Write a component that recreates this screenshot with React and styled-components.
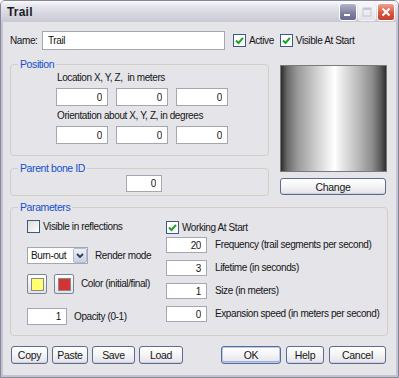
import React from 'react';
import styled, { createGlobalStyle, css } from 'styled-components';

const FONT = `"Liberation Sans", Arial, sans-serif`;

const GlobalStyle = createGlobalStyle`
  html, body { margin: 0; padding: 0; background: #ffffff; }
  * { box-sizing: border-box; }
`;

const Window = styled.div`
  width: 399px;
  height: 378px;
  display: flex;
  flex-direction: column;
  background: #c4c4d0;
  border: 1px solid #86869a;
  border-radius: 5px 5px 0 0;
  overflow: hidden;
  font-family: ${FONT};
  font-size: 10px;
  letter-spacing: -0.4px;
  color: #151515;
`;

const TitleBar = styled.div`
  height: 21px;
  flex: none;
  display: flex;
  align-items: center;
  justify-content: space-between;
  padding: 0 3px 0 6px;
  background: linear-gradient(#fdfdfe 0%, #e9e9f0 18%, #d9d9e2 55%, #c9c9d5 100%);
`;

const Title = styled.span`
  font-family: "Liberation Sans", Arial, sans-serif;
  font-weight: bold;
  font-size: 12px;
  letter-spacing: 0.2px;
  color: #1c1c26;
`;

const TitleButtons = styled.div`
  display: flex;
  gap: 1px;
  padding-top: 1px;
`;

const titleVariants = {
  min: css`
    background: linear-gradient(#b4b4cc, #7c7ca0 60%, #6a6a90);
    border-color: #ffffff;
  `,
  max: css`
    background: linear-gradient(#f6f6fa, #e2e2ea);
    border-color: #f4f4f8;
  `,
  close: css`
    background: linear-gradient(#f0a090, #d8583e 55%, #c4402a);
    border-color: #ffffff;
  `,
};

const TitleBtn = styled.div`
  width: 18px;
  height: 18px;
  border: 1px solid;
  border-radius: 3px;
  display: flex;
  align-items: center;
  justify-content: center;
  ${(p) => titleVariants[p.$kind]}
`;

const Body = styled.div`
  flex: 1;
  margin: 0 2px 2px;
  background: #e4e4e9;
  padding: 9px 8px 0 7px;
  display: flex;
  flex-direction: column;
`;

const Row = styled.div`
  display: flex;
  align-items: center;
  gap: ${(p) => p.$gap || 0}px;
  margin-top: ${(p) => p.$mt || 0}px;
  margin-left: ${(p) => p.$ml || 0}px;
`;

const FieldLabel = styled.span`
  width: ${(p) => (p.$w ? `${p.$w}px` : 'auto')};
  white-space: nowrap;
  line-height: 12px;
  padding-left: ${(p) => p.$pl || 0}px;
`;

const TextBox = styled.input`
  width: ${(p) => p.$w}px;
  height: ${(p) => p.$h || 17}px;
  border: 1px solid #a2a7b2;
  background: #ffffff;
  font-family: ${FONT};
  font-size: 10px;
  letter-spacing: -0.4px;
  color: #151515;
  padding: 0 5px;
  margin: 0;
  text-align: ${(p) => (p.$left ? 'left' : 'right')};
  outline: none;
`;

const CheckWrap = styled.label`
  display: flex;
  align-items: center;
  gap: 3px;
  white-space: nowrap;
  margin-left: ${(p) => p.$ml || 0}px;
  margin-top: ${(p) => p.$mt || 0}px;
`;

const CheckBox = styled.span`
  width: 13px;
  height: 13px;
  border: 1px solid #3a5a80;
  background: ${(p) => (p.$on ? '#ffffff' : 'linear-gradient(135deg, #dcdcd8, #ffffff)')};
  display: flex;
  align-items: center;
  justify-content: center;
`;

const Check = ({ on, children, ml, mt }) => (
  <CheckWrap $ml={ml} $mt={mt}>
    <CheckBox $on={on}>
      {on && (
        <svg width="9" height="9" viewBox="0 0 9 9">
          <path d="M1 4.5 L3.5 7 L8 1.8" fill="none" stroke="#21a121" strokeWidth="2" />
        </svg>
      )}
    </CheckBox>
    {children}
  </CheckWrap>
);

const TopGrid = styled.div`
  display: grid;
  grid-template-columns: 259px 107px;
  column-gap: 11px;
  margin-top: 8px;
`;

const Column = styled.div`
  display: flex;
  flex-direction: column;
  gap: ${(p) => p.$gap || 0}px;
`;

const Group = styled.fieldset`
  margin: ${(p) => p.$m || 0};
  min-width: 0;
  border: 1px solid #cfcfc6;
  border-radius: 4px;
  padding: 0;
`;

const GroupBody = styled.div`
  padding: ${(p) => p.$pad};
`;

const Legend = styled.legend`
  margin-left: 7px;
  padding: 0 2px;
  color: #1450c8;
  font-size: 10.5px;
  line-height: 12px;
`;

const InputTriple = styled.div`
  display: flex;
  gap: 8px;
  margin-top: ${(p) => p.$mt || 0}px;
`;

const Picture = styled.div`
  width: 107px;
  height: 107px;
  margin-top: 7px;
  border: 1px solid #7a7a7a;
  background: linear-gradient(
    to right,
    #2c2c2c 0%,
    #6a6a6a 6%,
    #9a9a9a 16%,
    #c4c4c4 30%,
    #f2f2f2 46%,
    #ffffff 51%,
    #e2e2e2 60%,
    #b8b8b8 74%,
    #8c8c8c 87%,
    #5a5a5a 95%,
    #2e2e2e 100%
  );
`;

const Button = styled.button`
  width: ${(p) => p.$w}px;
  height: ${(p) => p.$h || 18}px;
  margin: ${(p) => p.$m || 0};
  padding: 0;
  border: 1px solid #5c6c8c;
  border-radius: 3px;
  background: linear-gradient(#ffffff 0%, #f4f4f6 50%, #e2e2ea 100%);
  box-shadow: ${(p) =>
    p.$default ? 'inset 0 0 0 1px #b6c8ec, inset 0 -1px 0 1px #9ab0e0' : 'inset 0 -1px 0 #d0d0da'};
  font-family: ${FONT};
  font-size: 10.5px;
  letter-spacing: -0.3px;
  color: #151515;
  display: flex;
  align-items: center;
  justify-content: center;
`;

const Params = styled.div`
  display: grid;
  grid-template-columns: 139px 1fr;
`;

const Select = styled.div`
  width: 61px;
  height: 17px;
  border: 1px solid #a2a7b2;
  background: #ffffff;
  display: flex;
  align-items: stretch;
`;

const SelectText = styled.span`
  flex: 1;
  padding-left: 3px;
  line-height: 15px;
  white-space: nowrap;
`;

const SelectArrow = styled.span`
  width: 14px;
  border: 1px solid #b4bcd4;
  border-radius: 2px;
  background: linear-gradient(#eef0f8, #c8d0e4);
  display: flex;
  align-items: center;
  justify-content: center;
`;

const ColorBtn = styled.div`
  width: 20px;
  height: 20px;
  border: 1px solid #7a8498;
  border-radius: 2px;
  background: linear-gradient(#ffffff, #e2e2e8);
  display: flex;
  align-items: center;
  justify-content: center;
`;

const Swatch = styled.span`
  width: 13px;
  height: 13px;
  border: 1px solid #8a8a8a;
  background: ${(p) => p.$c};
`;

const ParamRows = styled.div`
  display: flex;
  flex-direction: column;
  gap: 7px;
  margin-top: 3px;
`;

const ButtonBar = styled.div`
  display: flex;
  justify-content: space-between;
  margin-top: 10px;
  padding: 0 2px 0 1px;
`;

const ButtonGroup = styled.div`
  display: flex;
  gap: ${(p) => p.$gap}px;
`;

const params = [
  ['20', 'Frequency (trail segments per second)'],
  ['3', 'Lifetime (in seconds)'],
  ['1', 'Size (in meters)'],
  ['0', 'Expansion speed (in meters per second)'],
];

export default function App() {
  return (
    <>
      <GlobalStyle />
      <Window>
        <TitleBar>
          <Title>Trail</Title>
          <TitleButtons>
            <TitleBtn $kind="min">
              <svg width="12" height="12" viewBox="0 0 12 12">
                <rect x="2" y="8" width="6" height="2" fill="#ffffff" />
              </svg>
            </TitleBtn>
            <TitleBtn $kind="max">
              <svg width="12" height="12" viewBox="0 0 12 12">
                <rect x="2" y="2" width="8" height="8" fill="none" stroke="#c8c8d4" strokeWidth="1" />
                <rect x="2" y="2" width="8" height="2" fill="#c8c8d4" />
              </svg>
            </TitleBtn>
            <TitleBtn $kind="close">
              <svg width="12" height="12" viewBox="0 0 12 12">
                <path d="M2.5 2.5 L9.5 9.5 M9.5 2.5 L2.5 9.5" stroke="#ffffff" strokeWidth="2" />
              </svg>
            </TitleBtn>
          </TitleButtons>
        </TitleBar>
        <Body>
          <Row>
            <FieldLabel $w={32}>Name:</FieldLabel>
            <TextBox $w={183} $h={19} $left defaultValue="Trail" />
            <Check on ml={8}>Active</Check>
            <Check on ml={6}>Visible At Start</Check>
          </Row>

          <TopGrid>
            <Column $gap={6}>
              <Group>
                <Legend>Position</Legend>
                <GroupBody $pad="2px 0 11px 45px">
                  <FieldLabel $pl={1}>Location X, Y, Z,&nbsp; in meters</FieldLabel>
                  <InputTriple $mt={4}>
                    <TextBox $w={52} $h={18} defaultValue="0" />
                    <TextBox $w={52} $h={18} defaultValue="0" />
                    <TextBox $w={52} $h={18} defaultValue="0" />
                  </InputTriple>
                  <Row $mt={4}>
                    <FieldLabel $pl={1}>Orientation about X, Y, Z, in degrees</FieldLabel>
                  </Row>
                  <InputTriple $mt={4}>
                    <TextBox $w={52} $h={18} defaultValue="0" />
                    <TextBox $w={52} $h={18} defaultValue="0" />
                    <TextBox $w={52} $h={18} defaultValue="0" />
                  </InputTriple>
                </GroupBody>
              </Group>
              <Group>
                <Legend>Parent bone ID</Legend>
                <GroupBody $pad="1px 0 3px 115px">
                  <TextBox $w={36} $h={17} defaultValue="0" />
                </GroupBody>
              </Group>
            </Column>
            <Column>
              <Picture />
              <Button $w={106} $h={17} $m="6px 0 0 0">Change</Button>
            </Column>
          </TopGrid>

          <Group $m="5px 0 0 0">
            <Legend>Parameters</Legend>
            <GroupBody $pad="7px 0 10px 16px">
              <Params>
                <Column>
                  <Check>Visible in reflections</Check>
                  <Row $gap={7} $mt={14}>
                    <Select>
                      <SelectText>Burn-out</SelectText>
                      <SelectArrow>
                        <svg width="8" height="6" viewBox="0 0 8 6">
                          <path d="M1 1 L4 4 L7 1" fill="none" stroke="#333a4c" strokeWidth="1.8" />
                        </svg>
                      </SelectArrow>
                    </Select>
                    <FieldLabel>Render mode</FieldLabel>
                  </Row>
                  <Row $gap={7} $mt={10}>
                    <ColorBtn>
                      <Swatch $c="#ffff70" />
                    </ColorBtn>
                    <ColorBtn>
                      <Swatch $c="#d23434" />
                    </ColorBtn>
                    <FieldLabel>Color (initial/final)</FieldLabel>
                  </Row>
                  <Row $gap={7} $mt={14}>
                    <TextBox $w={40} $h={17} defaultValue="1" />
                    <FieldLabel>Opacity (0-1)</FieldLabel>
                  </Row>
                </Column>
                <Column>
                  <Check on mt={1}>Working At Start</Check>
                  <ParamRows>
                    {params.map(([v, label]) => (
                      <Row key={label} $gap={8}>
                        <TextBox $w={41} $h={16} defaultValue={v} />
                        <FieldLabel>{label}</FieldLabel>
                      </Row>
                    ))}
                  </ParamRows>
                </Column>
              </Params>
            </GroupBody>
          </Group>

          <ButtonBar>
            <ButtonGroup $gap={4}>
              <Button $w={37}>Copy</Button>
              <Button $w={36}>Paste</Button>
              <Button $w={43}>Save</Button>
              <Button $w={44}>Load</Button>
            </ButtonGroup>
            <ButtonGroup $gap={5}>
              <Button $w={60} $default>OK</Button>
              <Button $w={38}>Help</Button>
              <Button $w={57}>Cancel</Button>
            </ButtonGroup>
          </ButtonBar>
        </Body>
      </Window>
    </>
  );
}
